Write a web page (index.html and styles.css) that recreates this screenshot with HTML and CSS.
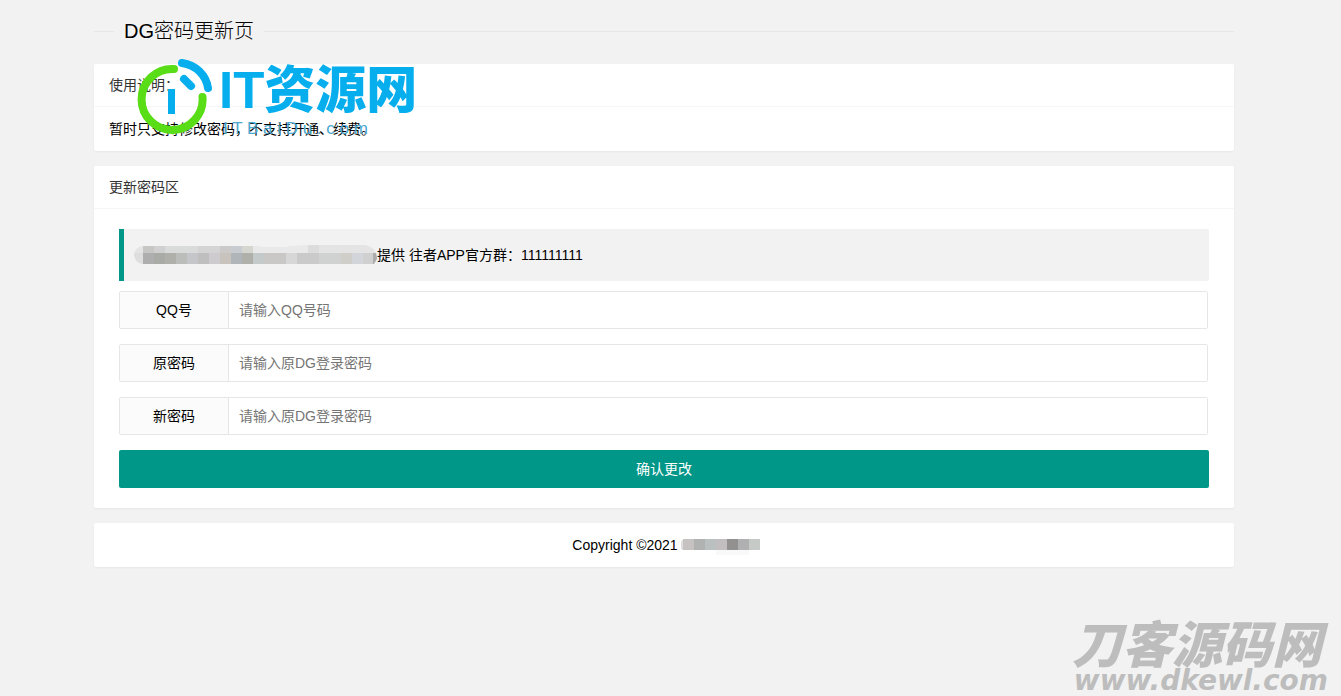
FILE: index.html
```html
<!DOCTYPE html>
<html lang="zh-CN">
<head>
<meta charset="utf-8">
<title>DG密码更新页</title>
<link rel="stylesheet" href="styles.css">
</head>
<body>
<main class="container">
  <header class="title-line"><h1 class="title">DG密码更新页</h1></header>

  <section class="card">
    <h2 class="card-header">使用说明：</h2>
    <div class="card-body">暂时只支持修改密码，不支持开通、续费。</div>
  </section>

  <section class="card">
    <h2 class="card-header">更新密码区</h2>
    <form class="form">
      <blockquote class="quote">
        <svg class="mosaic" width="243" height="20" viewBox="0 0 243 20" aria-hidden="true">
          <clipPath id="pill"><path d="M9 1H120Q140 4 160 1Q190 -1 232 0Q243 3 243 14L240 19H9A9 9 0 0 1 9 1Z"/></clipPath>
          <g clip-path="url(#pill)" shape-rendering="crispEdges">
            <path fill="#e4e4e4" d="M0 0h243v8H0z"/><path fill="#dedede" d="M0 8h9v12H0z"/>
            <path fill="#c6c6c5" d="M9 0h11v8H9z"/><path fill="#d1d0d0" d="M20 0h11v8H20z"/><path fill="#d9dbda" d="M31 0h33v8H31z"/><path fill="#d4d4d5" d="M64 0h22v8H64z"/><path fill="#ccc9c9" d="M86 0h11v8H86z"/><path fill="#c8cbd0" d="M97 0h11v8H97z"/><path fill="#d5d6d0" d="M108 0h11v8h-11z"/><path fill="#e9e9e9" d="M119 0h55v8h-55z"/><path fill="#dcdcdc" d="M174 0h11v8h-11z"/>
            <path fill="#aeaeae" d="M9 8h11v12H9z"/><path fill="#a9aba6" d="M20 8h11v12H20z"/><path fill="#b0b0ab" d="M31 8h11v12H31z"/><path fill="#bbbdba" d="M42 8h11v12H42z"/><path fill="#c5c6ca" d="M53 8h11v12H53z"/><path fill="#bfbfbf" d="M64 8h11v12H64z"/><path fill="#cdcbcd" d="M75 8h11v12H75z"/><path fill="#c8c3bd" d="M86 8h11v12H86z"/><path fill="#b0b5b9" d="M97 8h11v12H97z"/><path fill="#afb0aa" d="M108 8h11v12h-11z"/><path fill="#c4c9ca" d="M119 8h11v12h-11z"/><path fill="#c9c8c7" d="M130 8h22v12h-22z"/><path fill="#d7d7d7" d="M152 8h11v12h-11z"/><path fill="#cacacb" d="M163 8h22v12h-22z"/><path fill="#d0d1d1" d="M185 8h22v12h-22z"/><path fill="#cfcec9" d="M207 8h11v12h-11z"/><path fill="#d2d6da" d="M218 8h11v12h-11z"/><path fill="#d0d0d1" d="M229 8h10v12h-10z"/><path fill="#acacac" d="M239 8h5v12h-5z"/>
          </g>
        </svg><span>提供 往者APP官方群：111111111</span>
      </blockquote>
      <div class="field"><label class="label" for="qq">QQ号</label><input class="input" id="qq" type="text" placeholder="请输入QQ号码"></div>
      <div class="field"><label class="label" for="old">原密码</label><input class="input" id="old" type="password" placeholder="请输入原DG登录密码"></div>
      <div class="field"><label class="label" for="new">新密码</label><input class="input" id="new" type="password" placeholder="请输入原DG登录密码"></div>
      <button class="submit" type="button">确认更改</button>
    </form>
  </section>

  <footer class="card footer">
    <span>Copyright ©2021</span>
    <svg class="footer-mosaic" width="79" height="16" viewBox="0 0 79 16" shape-rendering="crispEdges" aria-hidden="true">
      <path fill="#dedede" d="M2 0v11H1L0 9V3z"/><path fill="#c6c2c2" d="M2 0h11v11H2z"/><path fill="#b0b2b1" d="M13 0h11v11H13z"/><path fill="#babfc0" d="M24 0h11v11H24z"/><path fill="#c2bebf" d="M35 0h11v11H35z"/><path fill="#92918f" d="M46 0h11v11H46z"/><path fill="#b0afb1" d="M57 0h11v11H57z"/><path fill="#c5cac7" d="M68 0h11v11H68z"/><path fill="#f9f9f9" d="M35 11h33v5H35z"/>
    </svg>
  </footer>

  <div class="brand">
    <svg class="brand-mark" width="76" height="76" viewBox="0 0 76 76" fill="none" aria-hidden="true">
      <path d="M37 11A30.500 30.500 0 1 0 65.500 39" stroke="#58dd17" stroke-width="8" stroke-linecap="round"/>
      <path d="M45 5C59 7 69 17 71 30" stroke="#06aeee" stroke-width="8" stroke-linecap="round"/>
      <path d="M47 21L54 28" stroke="#06aeee" stroke-width="8" stroke-linecap="round"/>
      <path fill="#06aeee" d="M31 31h7v25h-7z"/>
    </svg>
    <span class="brand-name">IT资源网</span>
    <span class="brand-site">I T B a i D u . c o m</span>
  </div>
</main>
<aside class="watermark"><span class="watermark-name">刀客源码网</span><span class="watermark-site">www.dkewl.com</span></aside>
</body>
</html>
```
FILE: styles.css
```css
* { box-sizing: border-box; }
body {
  margin: 0;
  padding: 0 13px 0 0;
  min-height: 100vh;
  position: relative;
  background: #f2f2f2;
  color: #000;
  font: 14px/24px "Liberation Sans", "Noto Sans CJK SC", sans-serif;
}
.container {
  position: relative;
  max-width: 1170px;
  margin: 0 auto;
  padding: 16px 15px;
  display: flex;
  flex-direction: column;
  gap: 15px;
}
.title-line {
  display: flex;
  align-items: center;
  height: 30px;
  margin-bottom: 3px;
}
.title-line::before, .title-line::after {
  content: "";
  height: 1px;
  background: #e6e6e6;
}
.title-line::before { width: 20px; }
.title-line::after { flex: 1; }
.title {
  margin: 0;
  padding: 0 10px;
  font-size: 20px;
  line-height: 30px;
  font-weight: 300;
}
.card {
  background: #fff;
  border-radius: 2px;
  box-shadow: 0 1px 2px rgba(0, 0, 0, 0.05);
}
.card-header {
  margin: 0;
  padding: 0 15px;
  border-bottom: 1px solid #f6f6f6;
  color: #333;
  font-size: 14px;
  font-weight: 400;
  line-height: 42px;
}
.card-body { padding: 10px 15px; }
.form { padding: 20px 25px; }
.quote {
  display: flex;
  align-items: center;
  margin: 0 0 10px;
  padding: 15px 15px 15px 10px;
  border-left: 5px solid #009688;
  border-radius: 0 2px 2px 0;
  background: #f2f2f2;
  line-height: 22px;
}
.mosaic { flex: none; }
.field {
  display: flex;
  height: 38px;
  margin: 0 1px 15px 0;
  border: 1px solid #e6e6e6;
  border-radius: 2px;
}
.label {
  width: 109px;
  border-right: 1px solid #e6e6e6;
  background: #fbfbfb;
  line-height: 36px;
  text-align: center;
}
.input {
  flex: 1;
  min-width: 0;
  padding: 0 10px;
  border: 0;
  background: #fff;
  font: inherit;
}
.input::placeholder { color: #757575; }
.submit {
  display: block;
  width: 100%;
  height: 38px;
  padding: 0;
  border: 0;
  border-radius: 2px;
  background: #009688;
  color: #fff;
  font: inherit;
}
.footer {
  display: flex;
  justify-content: center;
  align-items: center;
  gap: 3px;
  padding: 10px 15px 10px 19px;
}
.footer-mosaic { margin-top: 4px; }
.brand {
  position: absolute;
  top: 58px;
  left: 58px;
  display: grid;
  grid-template-columns: 82px auto;
  color: #06aeee;
  white-space: nowrap;
  pointer-events: none;
}
.brand-mark { grid-row: 1 / 3; }
.brand-name {
  padding-top: 4px;
  font-size: 51px;
  font-weight: 900;
  line-height: 58px;
}
.brand-site {
  padding-left: 4px;
  color: #4ba8d0;
  font-size: 17px;
  line-height: 18px;
}
.watermark {
  position: absolute;
  right: 13px;
  bottom: 3px;
  display: flex;
  flex-direction: column;
  align-items: flex-end;
  color: #bdbdbd;
  font-style: italic;
  font-weight: 900;
  pointer-events: none;
}
.watermark-name {
  padding-right: 6px;
  font-size: 50px;
  line-height: 46px;
}
.watermark-site {
  font-family: "DejaVu Sans", sans-serif;
  font-size: 28px;
  font-weight: 700;
  line-height: 24px;
}
```
